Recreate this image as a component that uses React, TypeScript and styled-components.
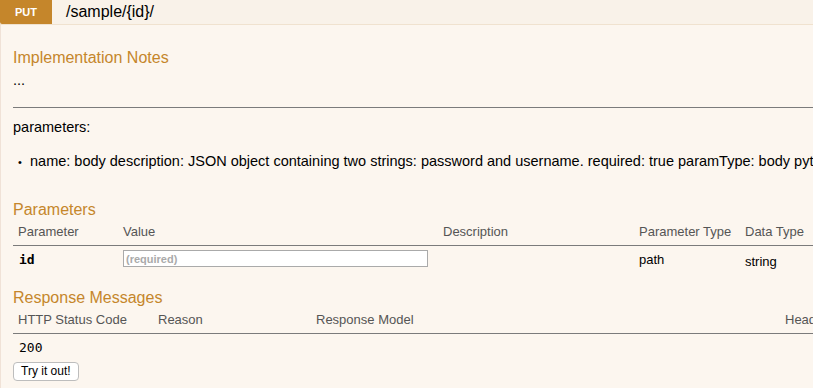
import styled, { createGlobalStyle } from 'styled-components'

const GlobalStyle = createGlobalStyle`
  html, body {
    margin: 0;
    padding: 0;
    overflow: hidden;
    background: #fcf6ef;
  }
  body {
    font-family: "Liberation Sans", Arial, sans-serif;
    color: #000;
  }
`

const Operation = styled.div`
  width: 813px;
  height: 388px;
  overflow: hidden;
  background: #fcf6ef;
`

const Heading = styled.div`
  display: flex;
  align-items: center;
  height: 24px;
  background: #f9f2e9;
  border-bottom: 1px solid #f0e2cf;
`

const Method = styled.span`
  display: flex;
  align-items: center;
  justify-content: center;
  width: 52px;
  height: 24px;
  background: #c5862b;
  color: #fff;
  font-size: 11px;
  font-weight: bold;
  border-radius: 0 0 0 2px;
`

const Path = styled.span`
  margin-left: 14px;
  font-size: 16px;
  color: #000;
`

const Content = styled.div`
  padding: 23px 0 0 12px;
  border-left: 1px solid #f0e2d7;
  height: 340px;
  white-space: nowrap;
`

const SectionTitle = styled.h4<{ $top?: number }>`
  margin: ${(p) => p.$top ?? 0}px 0 0;
  font-size: 16px;
  font-weight: normal;
  color: #c5862b;
  line-height: 20px;
`

const Text = styled.p`
  margin: 0;
  font-size: 14.5px;
  line-height: 16px;
`

const Ellipsis = styled(Text)`
  margin-top: 4px;
`

const Rule = styled.hr`
  margin: 19px 0 0;
  border: none;
  border-top: 1px solid #7b7b7b;
  height: 0;
`

const ParamsLabel = styled(Text)`
  margin-top: 11px;
`

const Bullets = styled.ul`
  margin: 18px 0 0;
  padding-left: 5px;
  font-size: 14.5px;
  line-height: 16px;
  list-style: none;

  li::before {
    content: '•';
    display: inline-block;
    width: 12px;
    font-size: 11px;
    color: #000;
  }
`

const Table = styled.div<{ $cols: string }>`
  display: grid;
  grid-template-columns: ${(p) => p.$cols};
`

const HeadCell = styled.div`
  padding: 4px 5px 6px;
  font-size: 13px;
  line-height: 15px;
  color: #555;
  border-bottom: 1px solid #7b7b7b;
`

const Cell = styled.div`
  display: flex;
  align-items: center;
  padding: 0 5px;
  height: 26px;
  font-size: 13px;
  color: #000;
`

const Code = styled.span<{ $bold?: boolean }>`
  font-family: "DejaVu Sans Mono", "Liberation Mono", monospace;
  font-size: 13px;
  font-weight: ${(p) => (p.$bold ? 'bold' : 'normal')};
  padding-left: 1px;
`

const ValueInput = styled.input`
  box-sizing: border-box;
  width: 305px;
  height: 17px;
  margin: -1px 0 0;
  padding: 0 2px;
  border: 1px solid #aaa;
  background: #fff;
  font-family: "Liberation Sans", Arial, sans-serif;
  font-size: 11px;
  outline: none;

  &::placeholder {
    color: #aaa;
    font-weight: bold;
  }
`

const Lower = styled.span<{ $dy?: number }>`
  position: relative;
  top: ${(p) => p.$dy ?? 0}px;
`

const TryButton = styled.button`
  margin-top: 2px;
  padding: 1px 7px 2px;
  height: 19px;
  font-family: "Liberation Sans", Arial, sans-serif;
  font-size: 12px;
  color: #000;
  background: #fff;
  border: 1px solid #bdbdbd;
  border-radius: 4px;
`

export default function App() {
  return (
    <>
      <GlobalStyle />
      <Operation>
        <Heading>
          <Method>PUT</Method>
          <Path>/sample/&#123;id&#125;/</Path>
        </Heading>
        <Content>
          <SectionTitle>Implementation Notes</SectionTitle>
          <Ellipsis>...</Ellipsis>
          <Rule />
          <ParamsLabel>parameters:</ParamsLabel>
          <Bullets>
            <li>
              name: body description: JSON object containing two strings: password and username. required: true
              paramType: body pytype: SampleSerializer
            </li>
          </Bullets>

          <SectionTitle $top={30}>Parameters</SectionTitle>
          <Table $cols="105px 320px 196px 106px 1fr">
            <HeadCell>Parameter</HeadCell>
            <HeadCell>Value</HeadCell>
            <HeadCell>Description</HeadCell>
            <HeadCell>Parameter Type</HeadCell>
            <HeadCell>Data Type</HeadCell>
            <Cell>
              <Code $bold>id</Code>
            </Cell>
            <Cell>
              <ValueInput placeholder="(required)" />
            </Cell>
            <Cell />
            <Cell>path</Cell>
            <Cell>
              <Lower $dy={2}>string</Lower>
            </Cell>
          </Table>

          <SectionTitle $top={16}>Response Messages</SectionTitle>
          <Table $cols="140px 158px 469px 1fr">
            <HeadCell>HTTP Status Code</HeadCell>
            <HeadCell>Reason</HeadCell>
            <HeadCell>Response Model</HeadCell>
            <HeadCell>Headers</HeadCell>
            <Cell>
              <Code>200</Code>
            </Cell>
            <Cell />
            <Cell />
            <Cell />
          </Table>
          <TryButton>Try it out!</TryButton>
        </Content>
      </Operation>
    </>
  )
}
